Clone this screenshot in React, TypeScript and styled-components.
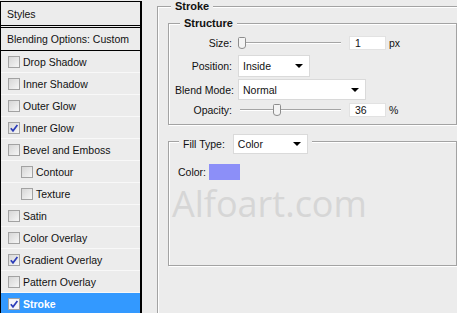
import React from 'react';
import styled, { createGlobalStyle } from 'styled-components';

const GlobalStyle = createGlobalStyle`
  html, body {
    margin: 0;
    padding: 0;
    background: #ececec;
  }
  body {
    font-family: "Liberation Sans", Arial, sans-serif;
    font-size: 10.5px;
    color: #111;
  }
`;

const effects = [
  { name: 'Drop Shadow' },
  { name: 'Inner Shadow' },
  { name: 'Outer Glow' },
  { name: 'Inner Glow', checked: true },
  { name: 'Bevel and Emboss' },
  { name: 'Contour', indent: true },
  { name: 'Texture', indent: true },
  { name: 'Satin' },
  { name: 'Color Overlay' },
  { name: 'Gradient Overlay', checked: true },
  { name: 'Pattern Overlay' },
  { name: 'Stroke', checked: true, selected: true },
];

function CheckBox({ checked, light }: { checked?: boolean; light?: boolean }) {
  return (
    <Check $light={light}>
      {checked && (
        <svg width="10" height="10" viewBox="0 0 10 10">
          <path d="M1.8 5.2 L4 7.8 L8.4 2" fill="none" stroke="#2b3cb8" strokeWidth="1.7" />
        </svg>
      )}
    </Check>
  );
}

function Slider({ value }: { value: number }) {
  return (
    <SliderTrack>
      <Thumb style={{ left: Math.round((value / 100) * 96) }}>
        <svg width="8" height="12" viewBox="0 0 8 12">
          <path
            d="M1.5 0.5 H6.5 Q7.5 0.5 7.5 1.5 V9 Q7.5 11.5 4 11.5 Q0.5 11.5 0.5 9 V1.5 Q0.5 0.5 1.5 0.5 Z"
            fill="#f4f4f4"
            stroke="#8d8d8d"
          />
        </svg>
      </Thumb>
    </SliderTrack>
  );
}

function App() {
  return (
    <>
      <GlobalStyle />
      <Dialog>
        <StylesList>
          <HeaderRow $double>Styles</HeaderRow>
          <HeaderRow>Blending Options: Custom</HeaderRow>
          {effects.map((e) => (
            <EffectRow key={e.name} $selected={e.selected} $indent={e.indent}>
              <CheckBox checked={e.checked} light={e.selected} />
              {e.name}
            </EffectRow>
          ))}
        </StylesList>

        <Main>
          <StrokeSet>
            <Legend $offset={3}>Stroke</Legend>
            <StructureSet>
              <Legend $offset={5}>Structure</Legend>
              <Field $h={15} $mt={5}>
                <Label>Size:</Label>
                <Slider value={0} />
                <NumInput>1</NumInput>
                <Unit>px</Unit>
              </Field>
              <Field $h={22} $mt={5}>
                <Label>Position:</Label>
                <Select $w={72} $h={22}>Inside</Select>
              </Field>
              <Field $h={21} $mt={2}>
                <Label>Blend Mode:</Label>
                <Select $w={128} $h={21}>Normal</Select>
              </Field>
              <Field $h={15} $mt={2}>
                <Label>Opacity:</Label>
                <Slider value={36} />
                <NumInput>36</NumInput>
                <Unit>%</Unit>
              </Field>
            </StructureSet>

            <FillSet>
              <FillLegend>
                <LegendRow>
                  Fill Type:
                  <Select $w={75} $h={20}>Color</Select>
                </LegendRow>
              </FillLegend>
              <ColorRow>
                Color:
                <Swatch />
              </ColorRow>
            </FillSet>
          </StrokeSet>
        </Main>

        <Watermark>Alfoart.com</Watermark>
      </Dialog>
    </>
  );
}

const Dialog = styled.div`
  position: relative;
  width: 457px;
  height: 313px;
  overflow: hidden;
  display: flex;
  gap: 15px;
  background: #ececec;
`;

const StylesList = styled.div`
  flex: none;
  width: 139px;
  margin-top: 1px;
  border-left: 1px solid #000;
  border-top: 1px solid #000;
  border-right: 2px solid #000;
  display: flex;
  flex-direction: column;
`;

const HeaderRow = styled.div<{ $double?: boolean }>`
  height: ${(p) => (p.$double ? 23 : 22)}px;
  display: flex;
  align-items: center;
  padding-left: 6px;
  border-bottom: ${(p) => (p.$double ? '3px double #000' : '1px solid #000')};
  flex: none;
`;

const EffectRow = styled.div<{ $selected?: boolean; $indent?: boolean }>`
  height: 21px;
  flex: none;
  display: flex;
  align-items: center;
  gap: 3px;
  padding-left: ${(p) => (p.$indent ? 20 : 7)}px;
  border-bottom: 1px solid #f8f8f8;
  background: ${(p) => (p.$selected ? '#3399ff' : 'transparent')};
  color: ${(p) => (p.$selected ? '#fff' : '#111')};
  font-weight: ${(p) => (p.$selected ? 'bold' : 'normal')};
`;

const Check = styled.span<{ $light?: boolean }>`
  flex: none;
  width: 12px;
  height: 12px;
  box-sizing: border-box;
  border: 1px solid #a2a2a2;
  background: ${(p) => (p.$light ? '#f4f4f8' : 'linear-gradient(135deg, #d6d6d6, #f6f6f6)')};
  display: flex;
  align-items: center;
  justify-content: center;
`;

const Main = styled.div`
  flex: none;
  width: 320px;
`;

const StrokeSet = styled.fieldset`
  box-sizing: border-box;
  width: 320px;
  height: 360px;
  margin: 0;
  padding: 4px 0 0 10px;
  border: 1px solid #a3a3a3;
  box-shadow: inset 1px 1px 0 #fff, 1px 1px 0 #fff;
`;

const Legend = styled.legend<{ $offset: number }>`
  margin-left: ${(p) => p.$offset}px;
  padding: 0 4px;
  font-size: 11px;
  line-height: 13px;
  font-weight: bold;
  color: #111;
  background: #ececec;
`;

const StructureSet = styled.fieldset`
  box-sizing: border-box;
  width: 289px;
  margin: 0;
  padding: 0 0 7px 6px;
  border: 1px solid #a3a3a3;
  box-shadow: inset 1px 1px 0 #fff, 1px 1px 0 #fff;
`;

const Field = styled.div<{ $h: number; $mt: number }>`
  display: flex;
  align-items: center;
  height: ${(p) => p.$h}px;
  margin-top: ${(p) => p.$mt}px;
`;

const Label = styled.span`
  flex: none;
  width: 57px;
  margin-right: 6px;
  text-align: right;
  white-space: nowrap;
`;

const SliderTrack = styled.div`
  position: relative;
  flex: none;
  width: 103px;
  height: 15px;
  &::before {
    content: '';
    position: absolute;
    left: 2px;
    right: 0;
    top: 7px;
    height: 1px;
    background: #a5a5a5;
    box-shadow: 0 1px 0 #fff;
  }
`;

const Thumb = styled.span`
  position: absolute;
  top: 2px;
  display: block;
  line-height: 0;
`;

const NumInput = styled.div`
  flex: none;
  box-sizing: border-box;
  width: 37px;
  height: 14px;
  margin-left: 8px;
  padding-left: 5px;
  line-height: 13px;
  background: #fff;
  border: 1px solid #e2e2e2;
`;

const Unit = styled.span`
  margin-left: 3px;
`;

const Select = styled.div<{ $w: number; $h: number }>`
  position: relative;
  flex: none;
  box-sizing: border-box;
  width: ${(p) => p.$w}px;
  height: ${(p) => p.$h}px;
  padding-left: 4px;
  display: flex;
  align-items: center;
  background: #fff;
  border: 1px solid #dadada;
  font-weight: normal;
  &::after {
    content: '';
    position: absolute;
    right: 6px;
    top: 50%;
    margin-top: -2px;
    border-top: 4px solid #000;
    border-left: 4px solid transparent;
    border-right: 4px solid transparent;
  }
`;

const FillSet = styled.fieldset`
  box-sizing: border-box;
  width: 289px;
  margin: 9px 0 0;
  padding: 16px 0 85px 9px;
  border: 1px solid #a3a3a3;
  box-shadow: inset 1px 1px 0 #fff, 1px 1px 0 #fff;
`;

const FillLegend = styled.legend`
  margin-left: 1px;
  padding: 0 4px;
  height: 14px;
  background: #ececec;
`;

const LegendRow = styled.div`
  display: flex;
  align-items: center;
  gap: 8px;
  height: 20px;
`;

const ColorRow = styled.div`
  display: flex;
  align-items: center;
  gap: 3px;
  height: 16px;
`;

const Swatch = styled.span`
  width: 31px;
  height: 16px;
  background: #8c8ff8;
`;

const Watermark = styled.div`
  position: absolute;
  left: 172px;
  top: 186px;
  font-family: "Open Sans", sans-serif;
  font-size: 36px;
  line-height: 36px;
  color: #d6d6d6;
  pointer-events: none;
`;

export default App;
